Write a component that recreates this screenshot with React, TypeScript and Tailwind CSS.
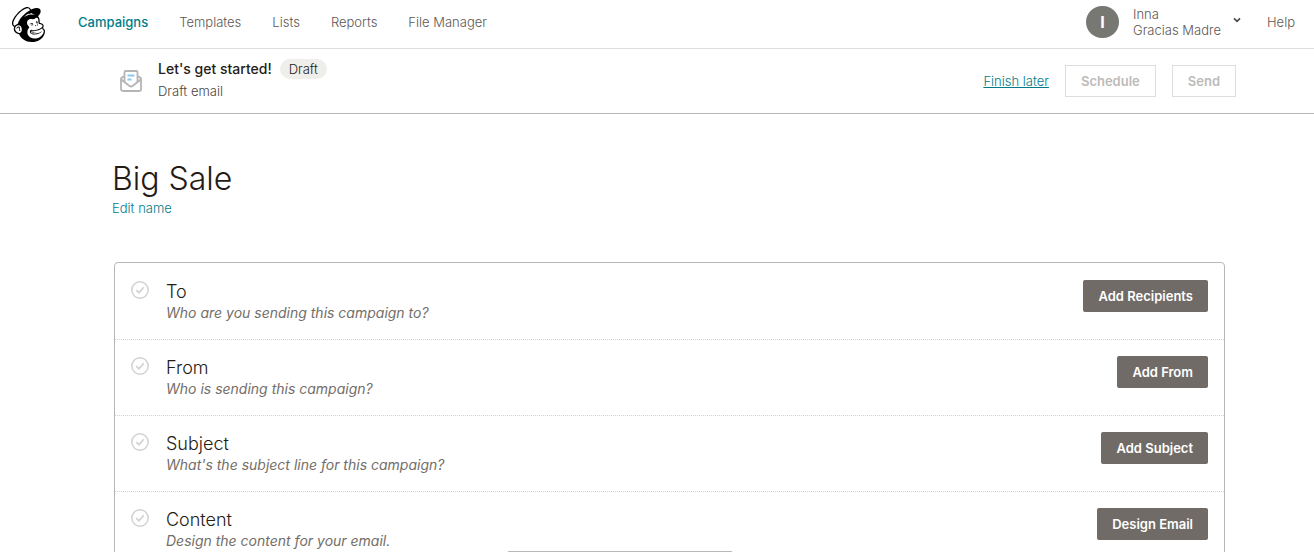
import React from "react";
import { SiMailchimp } from "react-icons/si";

const navLinks = ["Templates", "Lists", "Reports", "File Manager"];

const steps = [
  { title: "To", hint: "Who are you sending this campaign to?", action: "Add Recipients" },
  { title: "From", hint: "Who is sending this campaign?", action: "Add From" },
  { title: "Subject", hint: "What's the subject line for this campaign?", action: "Add Subject" },
  { title: "Content", hint: "Design the content for your email.", action: "Design Email" },
];

function EnvelopeIcon() {
  return (
    <svg className="h-6 w-6 shrink-0" viewBox="0 0 24 24" fill="none" aria-hidden="true">
      <g stroke="#b5b5b5" strokeWidth="1.8" strokeLinejoin="round" strokeLinecap="round">
        <path d="M5.500 13V3.200a1.200 1.200 0 0 1 1.200-1.200h10.600a1.200 1.200 0 0 1 1.200 1.200V13" />
        <path d="M5.200 7.200 2.800 8.600a1.400 1.400 0 0 0-.8 1.300v10.300A1.800 1.800 0 0 0 3.800 22h16.400a1.800 1.800 0 0 0 1.800-1.800V9.900a1.400 1.400 0 0 0-.8-1.300l-2.400-1.400" />
        <path d="m2.200 10.500 8 6.300a3 3 0 0 0 3.600 0l8-6.300" />
      </g>
      <path d="M8.500 6.500h7M8.500 10.500h4" stroke="#8cc8f0" strokeWidth="1.800" />
    </svg>
  );
}

function StepCheckIcon() {
  return (
    <svg className="mt-px h-[18px] w-[18px] shrink-0" viewBox="0 0 18 18" fill="none" stroke="#d2d2d2" aria-hidden="true">
      <circle cx="9" cy="9" r="8.2" strokeWidth="1.5" />
      <path d="m5.300 9.200 2.600 2.500 4.900-5.400" strokeWidth="1.700" />
    </svg>
  );
}

function Header() {
  return (
    <header className="flex h-[49px] items-center justify-between border-b border-[#dedddc] pr-[19px] pl-[11px]">
      <div className="flex items-center pb-1">
        <a href="#home" aria-label="Home" className="pt-1">
          <SiMailchimp className="size-[35px] text-black" />
        </a>
        <nav className="ml-8 flex gap-[31px] text-[#5d5753]">
          <a href="#campaigns" className="font-medium text-[#007c89]">Campaigns</a>
          {navLinks.map((label) => (
            <a key={label} href="#section">{label}</a>
          ))}
        </nav>
      </div>
      <div className="flex items-center pb-1">
        <button type="button" className="flex items-center text-left">
          <span className="flex h-8 w-[33px] items-center justify-center rounded-full bg-[#787873] text-base font-bold text-white">I</span>
          <span className="ml-[14px] leading-4 text-[#5d5753]">
            <span className="block">Inna</span>
            <span className="block">Gracias Madre</span>
          </span>
          <svg className="mb-1 ml-3 h-2 w-2" viewBox="0 0 8 8" fill="none" stroke="#4b4b46" strokeWidth="1.700" aria-hidden="true">
            <path d="M1 2.300 4 5.300l3-3" />
          </svg>
        </button>
        <a href="#help" className="ml-[26px] text-[#5d5753]">Help</a>
      </div>
    </header>
  );
}

function StatusBar() {
  return (
    <section className="flex h-[65px] items-center justify-between border-b border-[#b9b7b5] pr-[78px] pl-[119px]">
      <div className="flex items-center gap-[15px]">
        <EnvelopeIcon />
        <div className="pb-0.5">
          <div className="mb-0.5 flex items-center gap-2">
            <h2 className="text-sm leading-5 font-medium text-[#241c15]">Let's get started!</h2>
            <span className="rounded-full bg-[#efeeea] px-[9px] leading-5 text-[#241c15]">Draft</span>
          </div>
          <p className="leading-5 text-[#4c4640]">Draft email</p>
        </div>
      </div>
      <div className="flex items-center gap-4">
        <a href="#exit" className="text-[#007c89] underline">Finish later</a>
        <button type="button" disabled className="h-8 border border-[#dedddc] px-[15px] font-semibold text-[#bdbbb9]">Schedule</button>
        <button type="button" disabled className="h-8 border border-[#dedddc] px-[15px] font-semibold text-[#bdbbb9]">Send</button>
      </div>
    </section>
  );
}

export default function App() {
  return (
    <div className="relative h-screen overflow-hidden bg-white font-['Inter',sans-serif] text-[13px] leading-4 font-light text-[#241c15]">
      <Header />
      <StatusBar />
      <main className="pt-11 pr-[89px] pl-28">
        <h1 className="text-[32px] leading-[42px] font-light">Big Sale</h1>
        <a href="#rename" className="block text-[#007c89]">Edit name</a>
        <ul className="mt-[46px] ml-[2px] rounded border border-[#b9b7b5] pt-px">
          {steps.map((step) => (
            <li key={step.title} className="flex h-[76px] items-start justify-between border-b border-dotted border-[#d3d1cf] px-4 pt-4">
              <div className="flex gap-[17px]">
                <StepCheckIcon />
                <div>
                  <h3 className="text-lg leading-6">{step.title}</h3>
                  <p className="text-sm leading-[18px] font-normal text-[#736e69] italic">{step.hint}</p>
                </div>
              </div>
              <button type="button" className="h-8 rounded-xs bg-[#716b67] px-[15px] font-semibold text-white">{step.action}</button>
            </li>
          ))}
        </ul>
      </main>
      <div className="absolute -bottom-[31px] left-1/2 h-8 w-[226px] -translate-x-[150px] rounded-xs border border-[#b9b9b7] bg-white" />
    </div>
  );
}
